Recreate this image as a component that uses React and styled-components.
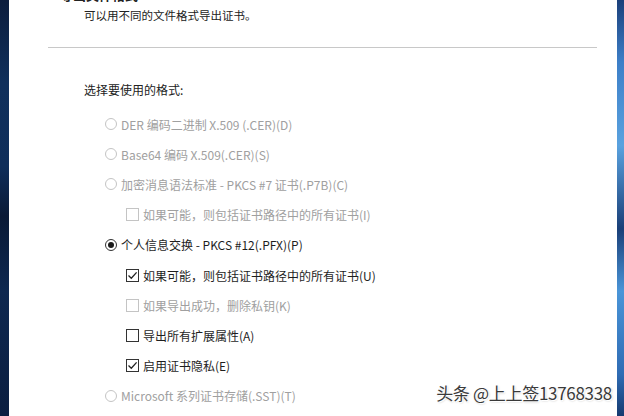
import React from 'react'
import styled, { createGlobalStyle } from 'styled-components'

const GlobalStyle = createGlobalStyle`
  html, body { margin: 0; padding: 0; background: #fff; }
  body { font-family: "Noto Sans CJK SC", "Noto Sans", sans-serif; }
`

const Screen = styled.div`
  display: flex;
  width: 624px;
  height: 416px;
  overflow: hidden;
  position: relative;
`

const LeftEdge = styled.div`
  width: 9px;
  background: linear-gradient(180deg, #0c1d3d 0%, #10305c 20%, #0f2e5a 40%, #0a1a36 52%, #0e2850 70%, #0b1e40 100%);
`

const RightEdge = styled.div`
  width: 7px;
  background: linear-gradient(180deg, #1b3f7a 0%, #3d7fc8 15%, #5aa2df 35%, #1a3f78 55%, #4a95d8 70%, #2f6cb4 90%, #163a70 100%);
`

const Dialog = styled.div`
  flex: 1;
  background: #fff;
  display: flex;
  flex-direction: column;
`

const Header = styled.div`
  margin: -13px 20px 0 39px;
  height: 60px;
  border-bottom: 1px solid #c8c8c8;
`

const HeaderTitle = styled.div`
  font-size: 13px;
  font-weight: 700;
  color: #222;
  line-height: 16px;
  padding-left: 12px;
`

const HeaderSub = styled.div`
  font-size: 11.5px;
  color: #222;
  line-height: 16px;
  margin-top: 4px;
  padding-left: 36px;
`

const Body = styled.div`
  padding: 34px 0 0 75px;
`

const Prompt = styled.div`
  font-size: 12px;
  color: #222;
  line-height: 16px;
  margin-bottom: 11px;
`

const Row = styled.div`
  display: flex;
  align-items: center;
  height: 30.2px;
  padding-left: ${p => (p.$sub ? 42 : 21)}px;
  color: ${p => (p.$disabled ? '#a0a0a0' : '#1e1e1e')};
  font-size: 12px;
`

const Radio = styled.span`
  box-sizing: border-box;
  width: 12px;
  height: 12px;
  border-radius: 50%;
  border: 1px solid ${p => (p.$disabled ? '#c4c4c4' : '#333')};
  margin-right: 4px;
  display: flex;
  align-items: center;
  justify-content: center;
  &::after {
    content: '';
    display: ${p => (p.$checked ? 'block' : 'none')};
    width: 6px;
    height: 6px;
    border-radius: 50%;
    background: #1a1a1a;
  }
`

const Box = styled.span`
  box-sizing: border-box;
  width: 13px;
  height: 13px;
  border: 1px solid ${p => (p.$disabled ? '#c4c4c4' : '#333')};
  margin-right: 4px;
  display: flex;
  align-items: center;
  justify-content: center;
`

const Watermark = styled.div`
  position: absolute;
  right: 12px;
  bottom: 11px;
  font-size: 17px;
  color: #3a3a3a;
  font-family: "Noto Sans CJK SC", sans-serif;
  text-shadow: 1px 1px 0 #fff, -1px -1px 0 #fff, 1px 1px 2px rgba(0, 0, 0, 0.25);
  letter-spacing: -0.3px;
`

const Check = () => (
  <svg width="11" height="11" viewBox="0 0 11 11">
    <path d="M1.5 5.5 L4.3 8.3 L9.6 2.4" fill="none" stroke="#222" strokeWidth="1.3" />
  </svg>
)

const options = [
  { kind: 'radio', text: 'DER 编码二进制 X.509 (.CER)(D)', disabled: true },
  { kind: 'radio', text: 'Base64 编码 X.509(.CER)(S)', disabled: true },
  { kind: 'radio', text: '加密消息语法标准 - PKCS #7 证书(.P7B)(C)', disabled: true },
  { kind: 'box', sub: true, text: '如果可能，则包括证书路径中的所有证书(I)', disabled: true },
  { kind: 'radio', text: '个人信息交换 - PKCS #12(.PFX)(P)', checked: true },
  { kind: 'box', sub: true, text: '如果可能，则包括证书路径中的所有证书(U)', checked: true },
  { kind: 'box', sub: true, text: '如果导出成功，删除私钥(K)', disabled: true },
  { kind: 'box', sub: true, text: '导出所有扩展属性(A)' },
  { kind: 'box', sub: true, text: '启用证书隐私(E)', checked: true },
  { kind: 'radio', text: 'Microsoft 系列证书存储(.SST)(T)', disabled: true },
]

export default function App() {
  return (
    <Screen>
      <GlobalStyle />
      <LeftEdge />
      <Dialog>
        <Header>
          <HeaderTitle>导出文件格式</HeaderTitle>
          <HeaderSub>可以用不同的文件格式导出证书。</HeaderSub>
        </Header>
        <Body>
          <Prompt>选择要使用的格式:</Prompt>
          {options.map((o, i) => (
            <Row key={i} $sub={o.sub} $disabled={o.disabled}>
              {o.kind === 'radio' ? (
                <Radio $checked={o.checked} $disabled={o.disabled} />
              ) : (
                <Box $disabled={o.disabled}>{o.checked && <Check />}</Box>
              )}
              <span>{o.text}</span>
            </Row>
          ))}
        </Body>
      </Dialog>
      <RightEdge />
      <Watermark>头条 @上上签13768338</Watermark>
    </Screen>
  )
}
